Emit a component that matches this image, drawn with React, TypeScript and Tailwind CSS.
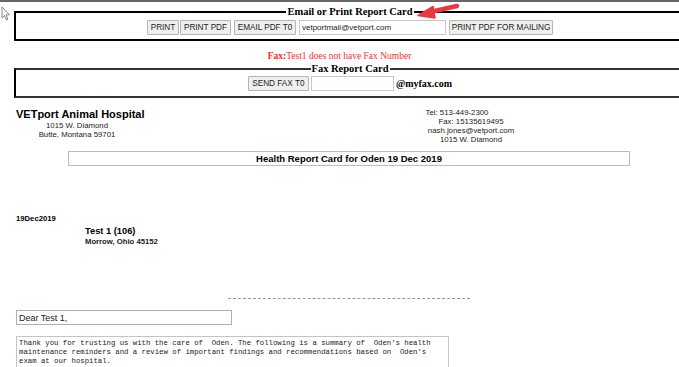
import React from "react"

const sans = { fontFamily: '"Liberation Sans", Arial, sans-serif' }
const serif = { fontFamily: '"Liberation Serif", "Times New Roman", serif' }
const mono = { fontFamily: '"Liberation Mono", "Courier New", monospace' }

function Btn({ label, cls }: { label: string; cls: string }) {
  return (
    <button
      className={`${cls} block h-[15px] border border-[#b5b5b5] bg-[#efefef] text-[8.2px] leading-[13px] text-[#222] whitespace-nowrap overflow-hidden rounded-[1px] p-0`}
      style={sans}
    >
      {label}
    </button>
  )
}

function App() {
  return (
    <div className="relative w-[679px] h-[367px] overflow-hidden bg-white border-t-2 border-[#666] text-black">
      {/* mouse pointer */}
      <svg className="absolute left-[1px] top-[4px]" width="10" height="15" viewBox="0 0 10 15">
        <path d="M1 1 L1 12 L3.5 9.5 L5.5 14 L7 13.3 L5 8.8 L8.5 8.8 Z" fill="#fff" stroke="#777" strokeWidth="0.9" strokeLinejoin="round" />
      </svg>

      {/* red annotation arrow */}
      <svg className="absolute left-[410px] top-[0px]" width="52" height="22" viewBox="0 0 52 22">
        <path d="M47 4 L20 10" stroke="#e8393f" strokeWidth="4.5" strokeLinecap="round" />
        <path d="M8 13.5 L23 4.5 L25 16 Z" fill="#e8393f" strokeLinejoin="round" stroke="#e8393f" strokeWidth="1.5" />
      </svg>

      <fieldset className="ml-[14px] mt-[3px] w-[672px] border-2 border-black pb-[4px]">
        <legend className="mx-auto px-[1px] text-[10.5px] leading-[13px] font-bold" style={serif}>
          Email or Print Report Card
        </legend>
        <div className="flex justify-center items-start mt-[2px]">
          <Btn label="PRINT" cls="w-[32px]" />
          <Btn label="PRINT PDF" cls="ml-[1px] w-[51px]" />
          <Btn label="EMAIL PDF T0" cls="ml-[3px] w-[62px]" />
          <input
            readOnly
            value="vetportmail@vetport.com"
            className="block ml-[3px] w-[147px] h-[15px] border border-[#c8c8c8] px-[2px] text-[8px] text-[#222] outline-none"
            style={sans}
          />
          <Btn label="PRINT PDF FOR MAILING" cls="ml-[3px] w-[104px]" />
        </div>
      </fieldset>

      <div className="mt-[10px] text-center text-[9.5px] leading-[11px] text-[#ff2a2a]" style={serif}>
        <span className="font-bold">Fax:</span>Test1 does not have Fax Number
      </div>

      <fieldset className="ml-[14px] w-[672px] border-2 border-[#333] border-l-black pb-[5px]">
        <legend className="mx-auto px-[1px] text-[10.5px] leading-[13px] font-bold" style={serif}>
          Fax Report Card
        </legend>
        <div className="flex justify-center items-center mt-[1px]">
          <Btn label="SEND FAX T0" cls="w-[61px]" />
          <input
            readOnly
            value=""
            className="block ml-[2px] w-[83px] h-[15px] border border-[#c8c8c8] px-[2px] text-[8px] outline-none"
            style={sans}
          />
          <span className="ml-[2px] text-[10px] font-bold leading-[14px]" style={serif}>@myfax.com</span>
        </div>
      </fieldset>

      <div className="flex mt-[10px] pl-[16px] text-[#222]" style={sans}>
        <div className="w-[130px]">
          <div className="text-[11px] leading-[13px] font-bold text-black">VETport Animal Hospital</div>
          <div className="text-center pr-[8px] text-[7.8px] leading-[9px]">
            <div>1015 W. Diamond</div>
            <div>Butte, Montana 59701</div>
          </div>
        </div>
        <div className="ml-[265px] w-[120px] text-center text-[7.8px] leading-[9px]">
          <div className="pr-[28px]">Tel: 513-449-2300</div>
          <div>Fax: 15135619495</div>
          <div>nash.jones@vetport.com</div>
          <div>1015 W. Diamond</div>
        </div>
      </div>

      <div
        className="ml-[68px] mt-[7px] w-[562px] h-[15px] border border-[#bdbdbd] text-center text-[9.5px] leading-[13px] font-bold"
        style={sans}
      >
        Health Report Card for Oden 19 Dec 2019
      </div>

      <div className="ml-[16px] mt-[48px] text-[7.7px] leading-[10px] font-bold" style={sans}>19Dec2019</div>
      <div className="ml-[85px] mt-[2px] text-[9.3px] leading-[11px] font-bold" style={sans}>Test 1 (106)</div>
      <div className="ml-[85px] text-[7.7px] leading-[10px] font-bold text-[#222]" style={sans}>Morrow, Ohio 45152</div>

      <div className="ml-[228px] mt-[51px] w-[242px] border-t border-dashed border-[#999]" />

      <input
        readOnly
        value="Dear Test 1,"
        className="block ml-[16px] mt-[11px] w-[216px] h-[15px] border border-[#b0b0b0] px-[2px] text-[9px] text-[#222] outline-none"
        style={sans}
      />

      <textarea
        readOnly
        className="block ml-[16px] mt-[11px] w-[433px] h-[60px] border border-[#c4c4c4] pl-[2px] pr-[14px] pt-[2px] text-[7.3px] leading-[9px] text-[#222] resize-none outline-none"
        style={mono}
        value={"Thank you for trusting us with the care of  Oden. The following is a summary of  Oden's health maintenance reminders and a review of important findings and recommendations based on  Oden's exam at our hospital."}
      />
    </div>
  )
}

export default App
